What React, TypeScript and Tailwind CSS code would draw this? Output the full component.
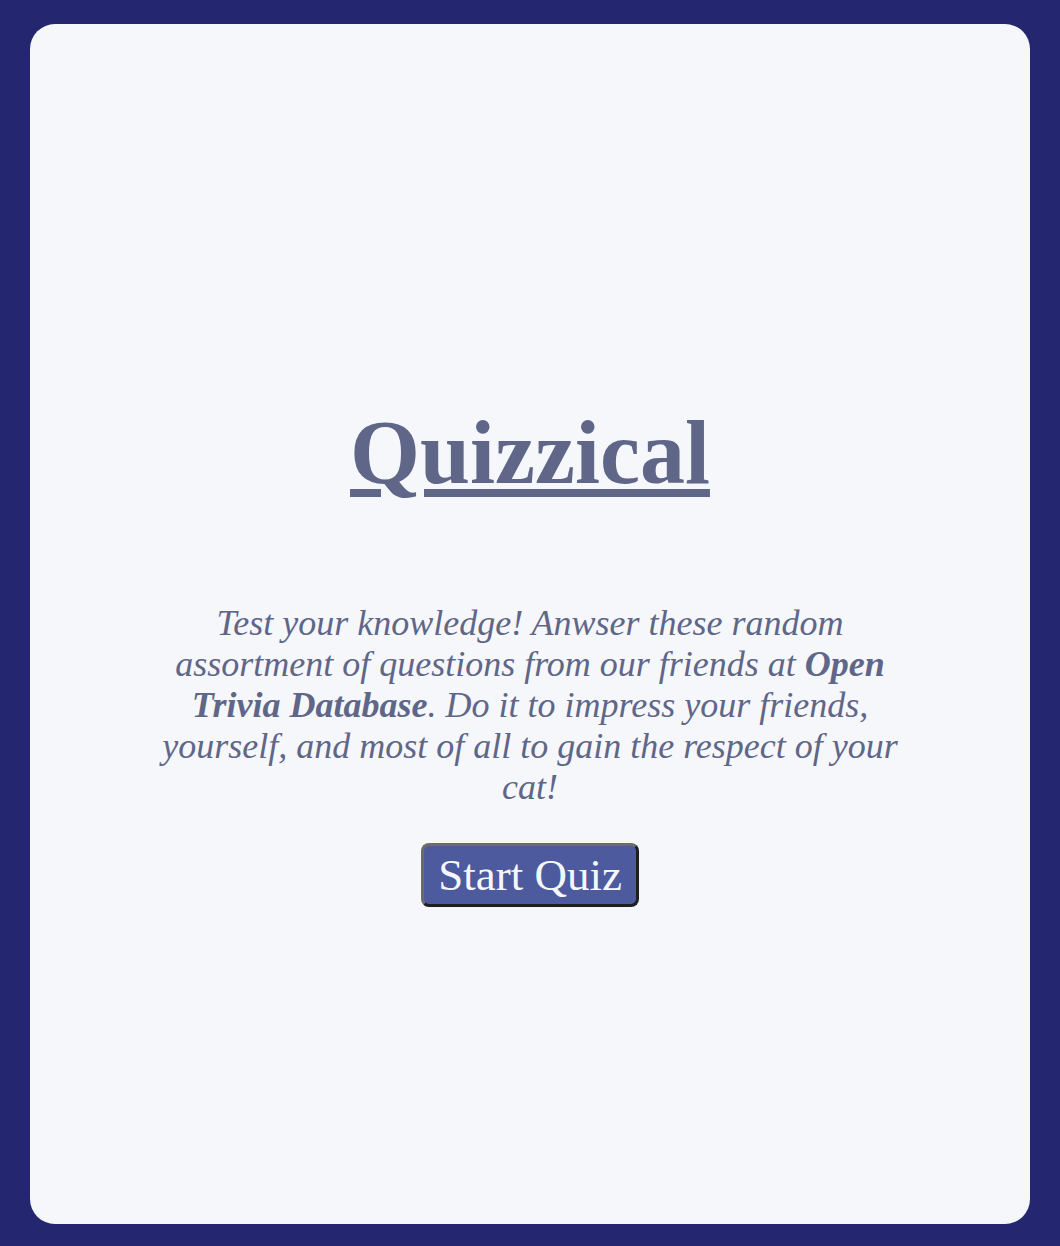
import React from 'react';

export default function App() {
  return (
    <div className="min-h-[1246px] bg-[#242670] px-[30px] pt-[24px] pb-[22px] flex" style={{ fontFamily: '"Liberation Serif", "Times New Roman", serif' }}>
      <main className="flex-1 h-[1200px] rounded-[25px] bg-[#f5f7fb] flex flex-col items-center pt-[384px] text-[#5f6688]">
        <h1 className="text-[90px] font-bold underline decoration-[8px] underline-offset-[6px] leading-none">Quizzical</h1>
        <p className="mt-[105px] w-[760px] text-center italic text-[36px] leading-[41px]">
          Test your knowledge! Anwser these random assortment of questions from our friends at{' '}
          <strong className="font-bold">Open Trivia Database</strong>. Do it to impress your friends, yourself, and most of
          all to gain the respect of your cat!
        </p>
        <button className="mt-[35px] rounded-[8px] border-[3px] border-t-[#6b6b6b] border-l-[#6b6b6b] border-r-[#1f1f1f] border-b-[#1f1f1f] bg-[#4d5b9e] px-[14px] py-[3px] text-[45px] leading-[52px] text-[#f5f7fb]">
          Start Quiz
        </button>
      </main>
    </div>
  );
}
